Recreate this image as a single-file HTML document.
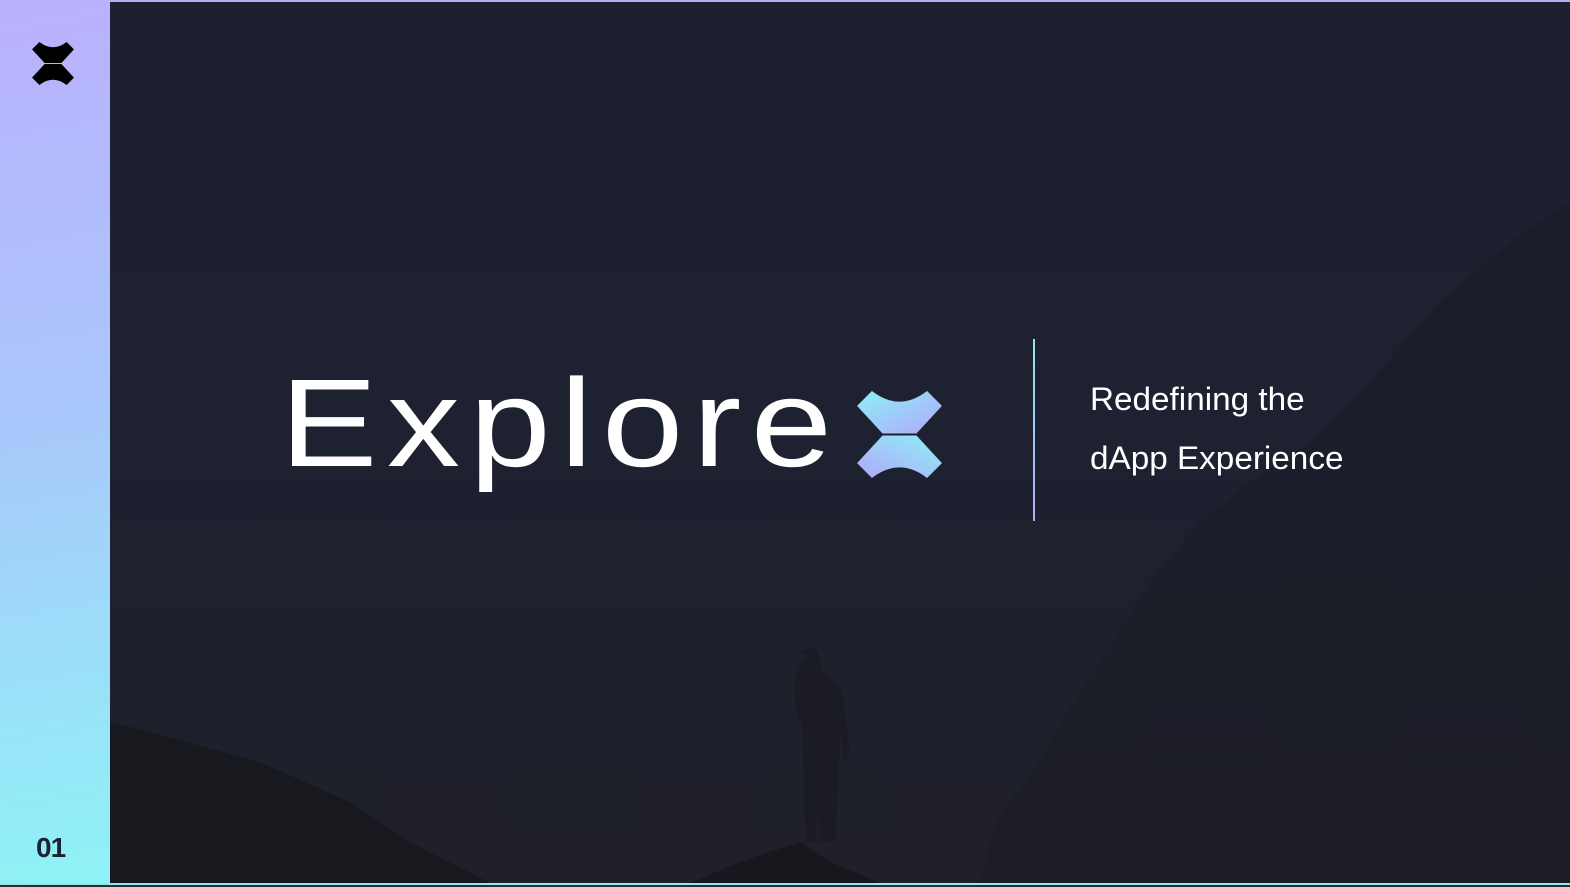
<!DOCTYPE html>
<html><head><meta charset="utf-8"><style>
html,body{margin:0;padding:0;width:1570px;height:887px;overflow:hidden;background:#2a2d36}
.side{position:absolute;left:0;top:0;width:110px;height:884px;background:linear-gradient(170deg,#bab0fd 0%,#aac6fb 45%,#8ef3f6 100%)}
.main{position:absolute;left:110px;top:2px;width:1460px;height:881px;background:linear-gradient(180deg,#1c2030 0%,#1d2130 50%,#1f2029 100%);overflow:hidden}
.topline{position:absolute;left:110px;top:0;width:1460px;height:2px;background:#b3b0f5}
.botline{position:absolute;left:0;top:883px;width:1570px;height:2px;background:#8ee8ee}
.num{position:absolute;left:36px;top:832px;font:bold 28px "Liberation Sans",sans-serif;color:#1d2233;letter-spacing:-1px}
.word{position:absolute;left:280px;top:352px;font:300 125px "Liberation Sans",sans-serif;color:#fff;letter-spacing:8px;transform:scaleX(1.17);transform-origin:left}
.vline{position:absolute;left:1033px;top:339px;width:2px;height:182px;background:linear-gradient(#8ee8f0,#b4aaf5)}
.tag{position:absolute;left:1090px;font:32px "Liberation Sans",sans-serif;color:#fff;transform:scaleX(1.04);transform-origin:left}
</style></head><body>
<div class="side"></div>
<div class="topline"></div>
<div class="main">
<svg width="1460" height="881" style="position:absolute;left:0;top:0">
<path d="M0 720 L40 730 L150 760 L240 800 L300 840 L380 881 L0 881Z" fill="#18181f"/>
<path d="M580 881 L630 860 L690 840 L720 860 L770 881Z" fill="#17171e"/>
<path d="M870 881 L885 820 L930 760 L950 720 L990 660 L1040 580 L1090 520 L1140 480 L1200 440 L1260 380 L1330 300 L1400 240 L1460 200 L1460 881Z" fill="#1a1b23" opacity=".45"/>
<path d="M690 650 q10-8 18 0 l4 20 q18 8 22 30 l6 50 l-6 10 l-4-30 l-2 60 l-2 40 l-2 10 l-14 0 l-2-40 l-2 40 l-10 0 l-2-50 l-2-70 l-4 0 l-4-30 q2-28 14-34 Z" fill="#1b1b24"/>
</svg>
</div>
<div class="botline"></div>
<svg style="position:absolute;left:32px;top:42px" width="42" height="43" viewBox="0 0 40 41">
<path d="M0 7 L7 0 Q20 10 33 0 L40 7 L28 20 L12 20Z" fill="#000"/>
<path d="M0 34 L7 41 Q20 31 33 41 L40 34 L28 21 L12 21Z" fill="#000"/>
</svg>
<div class="num">01</div>
<div class="word">Explore</div>
<svg style="position:absolute;left:856px;top:391px" width="87" height="87" viewBox="0 0 40 41">
<defs><linearGradient id="g" x1="0" y1="0" x2="1" y2="1"><stop offset="0" stop-color="#8ef0f5"/><stop offset="1" stop-color="#b0a8fa"/></linearGradient>
<linearGradient id="h" x1="1" y1="0" x2="0" y2="1"><stop offset="0" stop-color="#8ef0f5"/><stop offset="1" stop-color="#b0a8fa"/></linearGradient></defs>
<path d="M0 7 L7 0 Q20 10 33 0 L40 7 L28 20 L12 20Z" fill="url(#g)"/>
<path d="M0 34 L7 41 Q20 31 33 41 L40 34 L28 21 L12 21Z" fill="url(#h)"/>
</svg>
<div class="vline"></div>
<div class="tag" style="top:381px">Redefining the</div>
<div class="tag" style="top:440px">dApp Experience</div>
</body></html>
